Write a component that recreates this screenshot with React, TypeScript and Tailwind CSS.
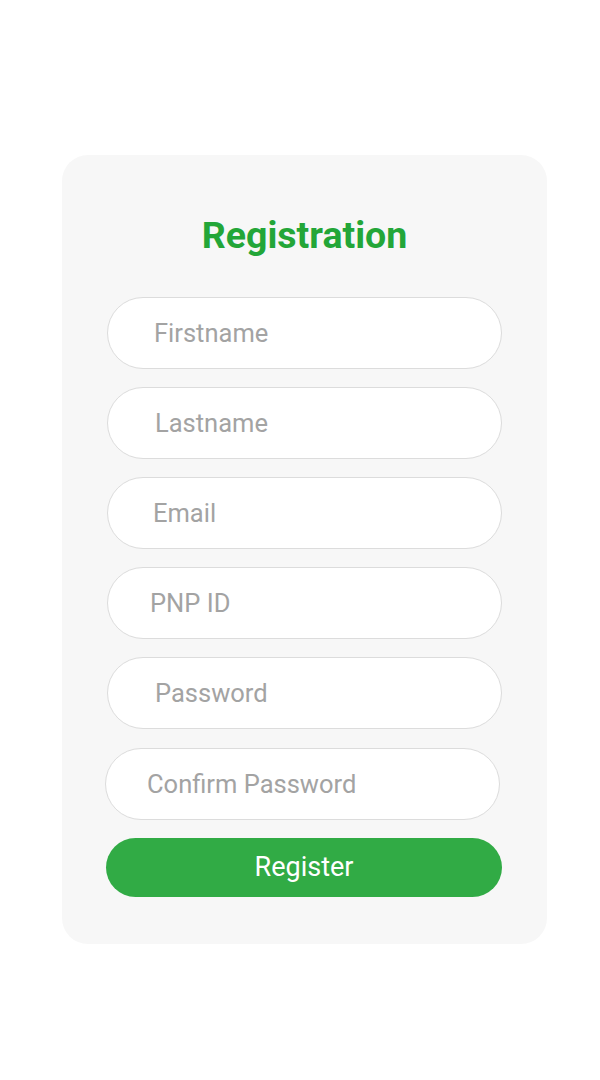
const FIELDS = [
  { placeholder: 'Firstname', type: 'text', cls: 'ml-0 pl-[46px]' },
  { placeholder: 'Lastname', type: 'text', cls: 'ml-0 pl-[47px]' },
  { placeholder: 'Email', type: 'email', cls: 'ml-0 pl-[45px]' },
  { placeholder: 'PNP ID', type: 'text', cls: 'ml-0 pl-[42px]' },
  { placeholder: 'Password', type: 'password', cls: 'ml-0 pl-[47px]' },
  { placeholder: 'Confirm Password', type: 'password', cls: '-ml-[2px] mt-[1px] pl-[41px]' },
]

export default function App() {
  return (
    <div className="min-h-[1080px] w-[600px] bg-white pt-[155px] font-['Roboto',sans-serif]">
      <div className="ml-[62px] w-[485px] rounded-[26px] bg-[#f7f7f7] px-[45px] pb-[47px] pt-[59px]">
        <h1 className="text-center text-[37.5px] font-bold leading-[42px] text-[#23a638]">
          Registration
        </h1>
        <form className="mt-[41px] flex flex-col gap-[18px]" onSubmit={(e) => e.preventDefault()}>
          {FIELDS.map((f) => (
            <input
              key={f.placeholder}
              type={f.type}
              placeholder={f.placeholder}
              className={`h-[72px] w-[395px] rounded-full border border-[#dcdcdc] bg-white pr-4 text-[25.5px] text-[#333] outline-none placeholder:text-[#a3a3a3] ${f.cls}`}
            />
          ))}
          <button
            type="submit"
            className="-ml-[1px] h-[59px] w-[396px] rounded-full bg-[#31ab45] text-[27px] text-white"
          >
            Register
          </button>
        </form>
      </div>
    </div>
  )
}
